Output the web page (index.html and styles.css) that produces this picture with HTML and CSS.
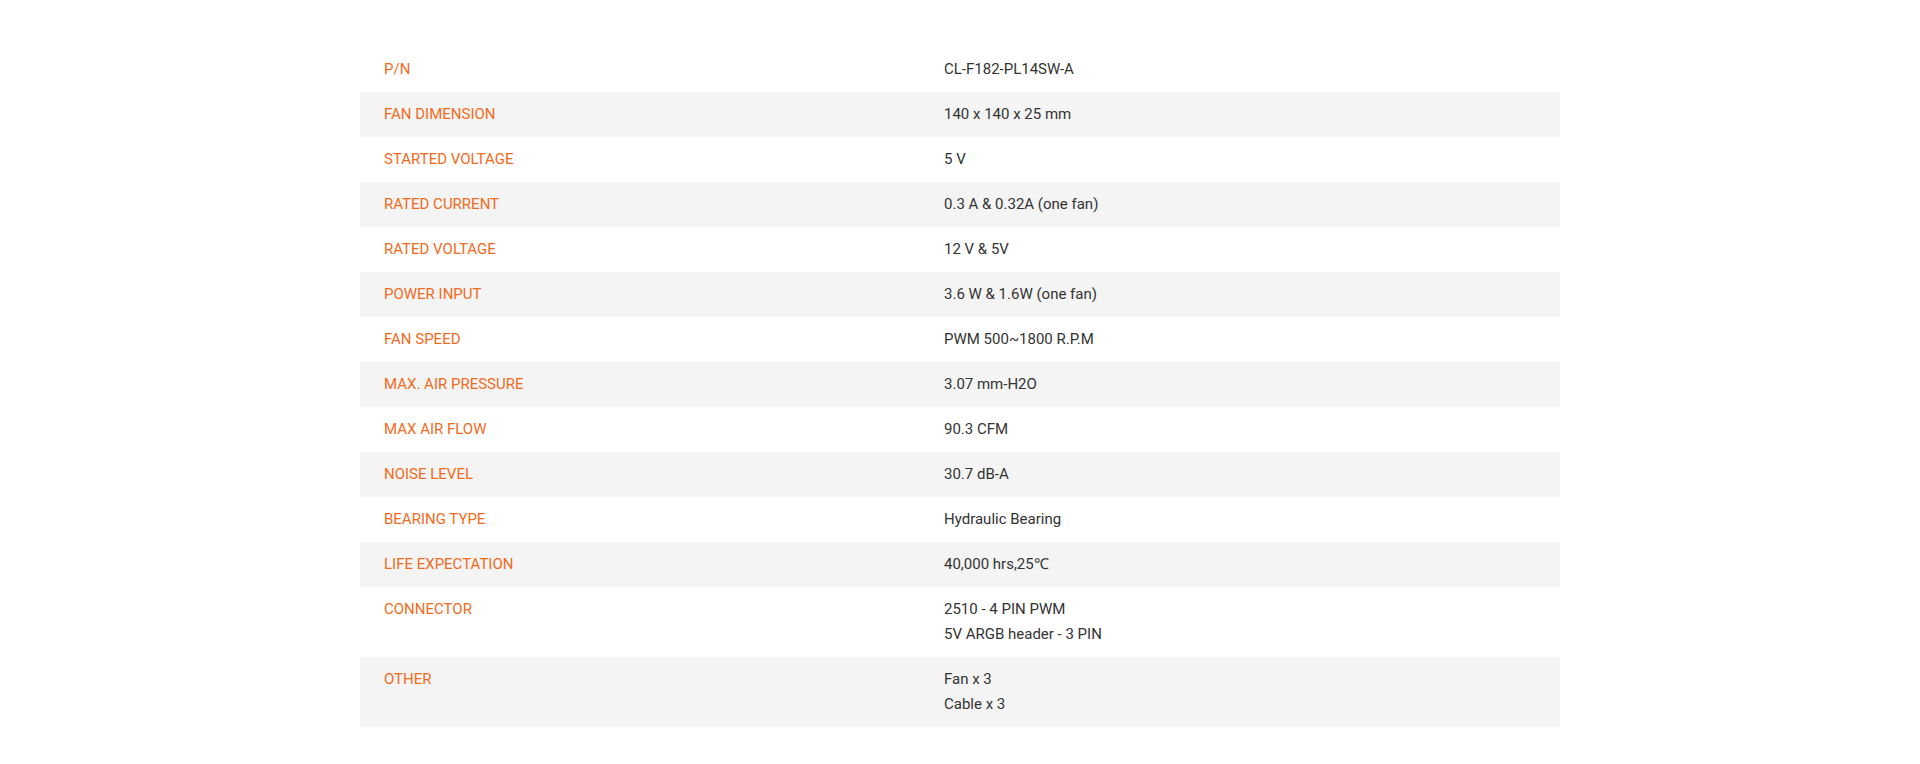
FILE: index.html
```html
<!DOCTYPE html>
<html lang="en">
<head>
<meta charset="utf-8">
<title>Specifications</title>
<link rel="stylesheet" href="styles.css">
</head>
<body>
<main class="page">
  <table class="spec">
    <tbody>
      <tr><th>P/N</th><td>CL-F182-PL14SW-A</td></tr>
      <tr><th>FAN DIMENSION</th><td>140 x 140 x 25 mm</td></tr>
      <tr><th>STARTED VOLTAGE</th><td>5 V</td></tr>
      <tr><th>RATED CURRENT</th><td>0.3 A &amp; 0.32A (one fan)</td></tr>
      <tr><th>RATED VOLTAGE</th><td>12 V &amp; 5V</td></tr>
      <tr><th>POWER INPUT</th><td>3.6 W &amp; 1.6W (one fan)</td></tr>
      <tr><th>FAN SPEED</th><td>PWM 500~1800 R.P.M</td></tr>
      <tr><th>MAX. AIR PRESSURE</th><td>3.07 mm-H2O</td></tr>
      <tr><th>MAX AIR FLOW</th><td>90.3 CFM</td></tr>
      <tr><th>NOISE LEVEL</th><td>30.7 dB-A</td></tr>
      <tr><th>BEARING TYPE</th><td>Hydraulic Bearing</td></tr>
      <tr><th>LIFE EXPECTATION</th><td>40,000 hrs,25℃</td></tr>
      <tr><th>CONNECTOR</th><td>2510 - 4 PIN PWM<br>5V ARGB header - 3 PIN</td></tr>
      <tr><th>OTHER</th><td>Fan x 3<br>Cable x 3</td></tr>
    </tbody>
  </table>
</main>
</body>
</html>
```

FILE: styles.css
```css
html, body {
  margin: 0;
  padding: 0;
  background: #ffffff;
}

body {
  font-family: Roboto, "Liberation Sans", sans-serif;
  font-size: 15px;
  color: #333333;
}

.page {
  padding-top: 47px;
  display: flex;
  justify-content: center;
}

.spec {
  width: 1200px;
  border-collapse: collapse;
  table-layout: fixed;
}

.spec tr:nth-child(even) {
  background: #f4f4f4;
}

.spec th,
.spec td {
  padding: 10px 24px;
  line-height: 25px;
  vertical-align: top;
  text-align: left;
  font-weight: 400;
}

.spec th {
  width: 512px;
  color: #f26b1d;
}

.spec td {
  color: #333333;
}
```
